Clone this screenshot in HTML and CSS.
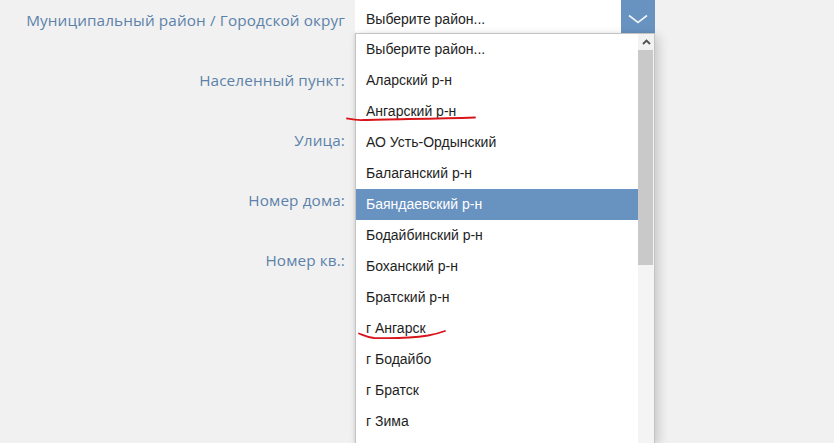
FILE: index.html
```html
<!DOCTYPE html>
<html lang="ru">
<head>
<meta charset="utf-8">
<title>Адрес</title>
<link rel="stylesheet" href="styles.css">
</head>
<body>
<form class="form">
  <div class="row">
    <label class="label">Муниципальный район / Городской округ</label>
    <div class="field">
      <div class="select">
        <span class="select-text">Выберите район...</span>
        <span class="select-btn">
          <svg width="20" height="10" viewBox="0 0 20 10"><path d="M1 1.5 L10 8.5 L19 1.5" fill="none" stroke="#eef4fa" stroke-width="1.6"/></svg>
        </span>
      </div>
      <div class="dropdown">
        <ul class="options">
          <li>Выберите район...</li>
          <li>Аларский р-н</li>
          <li>Ангарский р-н</li>
          <li>АО Усть-Ордынский</li>
          <li>Балаганский р-н</li>
          <li class="active">Баяндаевский р-н</li>
          <li>Бодайбинский р-н</li>
          <li>Боханский р-н</li>
          <li>Братский р-н</li>
          <li>г Ангарск</li>
          <li>г Бодайбо</li>
          <li>г Братск</li>
          <li>г Зима</li>
        </ul>
        <div class="scrollbar">
          <div class="sb-up">
            <svg width="9" height="6" viewBox="0 0 9 6"><path d="M1 5 L4.5 1.5 L8 5" fill="none" stroke="#505050" stroke-width="1.8"/></svg>
          </div>
          <div class="sb-thumb"></div>
          <div class="sb-track"></div>
        </div>
      </div>
    </div>
  </div>
  <div class="row">
    <label class="label">Населенный пункт:</label>
    <div class="field"><div class="input"></div></div>
  </div>
  <div class="row">
    <label class="label">Улица:</label>
    <div class="field"><div class="input"></div></div>
  </div>
  <div class="row">
    <label class="label">Номер дома:</label>
    <div class="field"><div class="input"></div></div>
  </div>
  <div class="row">
    <label class="label">Номер кв.:</label>
    <div class="field"><div class="input"></div></div>
  </div>
</form>
<svg class="marks" width="834" height="443" viewBox="0 0 834 443">
  <path d="M347 118.5 C352 119.5 356 120.5 364 120 C390 119 430 119 475 117.5" fill="none" stroke="#d8151b" stroke-width="1.8" stroke-linecap="round"/>
  <path d="M359 333.5 C363 335 367 337.5 374 338 C392 338.5 412 338 428 335.5 C436 334 441 332.5 445 331" fill="none" stroke="#d8151b" stroke-width="1.8" stroke-linecap="round"/>
</svg>
</body>
</html>
```

FILE: styles.css
```css
html, body {
  margin: 0;
  padding: 0;
}
body {
  background: #f1f1f1;
  width: 834px;
  height: 443px;
  overflow: hidden;
  position: relative;
}
.form {
  display: flex;
  flex-direction: column;
}
.row {
  display: flex;
  height: 60px;
}
.label {
  width: 345px;
  box-sizing: border-box;
  padding-top: 10px;
  text-align: right;
  font-family: "Open Sans", "Liberation Sans", sans-serif;
  font-size: 15.3px;
  letter-spacing: 0.12px;
  line-height: 20px;
  color: #5c82aa;
  white-space: nowrap;
}
.field {
  margin-left: 10px;
  width: 300px;
  position: relative;
}
.select {
  display: flex;
  height: 33px;
  background: #fff;
}
.select-text {
  flex: 1;
  padding: 9px 0 0 11px;
  font-family: "Liberation Sans", Arial, sans-serif;
  font-size: 14px;
  line-height: 20px;
  color: #222;
}
.select-btn {
  width: 34px;
  background: #6892c0;
  display: flex;
  align-items: center;
  justify-content: center;
  padding-top: 4px;
  box-sizing: border-box;
}
.input {
  height: 33px;
  margin-top: 3px;
  background: #fff;
}
.dropdown {
  position: absolute;
  top: 33px;
  left: 0;
  width: 300px;
  height: 410px;
  box-sizing: border-box;
  border: 1px solid #c4c4c4;
  border-bottom: 0;
  background: #fff;
  display: flex;
  box-shadow: 4px 3px 10px rgba(0, 0, 0, 0.16), -1px 0 3px rgba(0, 0, 0, 0.08);
  z-index: 2;
}
.options {
  list-style: none;
  margin: 0;
  padding: 0;
  flex: 1;
  font-family: "Liberation Sans", Arial, sans-serif;
  font-size: 14px;
  color: #1e1e1e;
}
.options li {
  height: 31px;
  line-height: 31px;
  padding-left: 10px;
  white-space: nowrap;
}
.options li.active {
  background: #6892c0;
  color: #fff;
}
.scrollbar {
  width: 16px;
  display: flex;
  flex-direction: column;
  background: #f2f2f2;
}
.sb-up {
  height: 16px;
  display: flex;
  align-items: center;
  justify-content: center;
}
.sb-thumb {
  height: 215px;
  background: #c9c9c9;
  margin: 0 1px 0 0;
}
.sb-track {
  flex: 1;
  background: #f4f4f4;
}
.marks {
  position: absolute;
  left: 0;
  top: 0;
  pointer-events: none;
  z-index: 3;
}
```
